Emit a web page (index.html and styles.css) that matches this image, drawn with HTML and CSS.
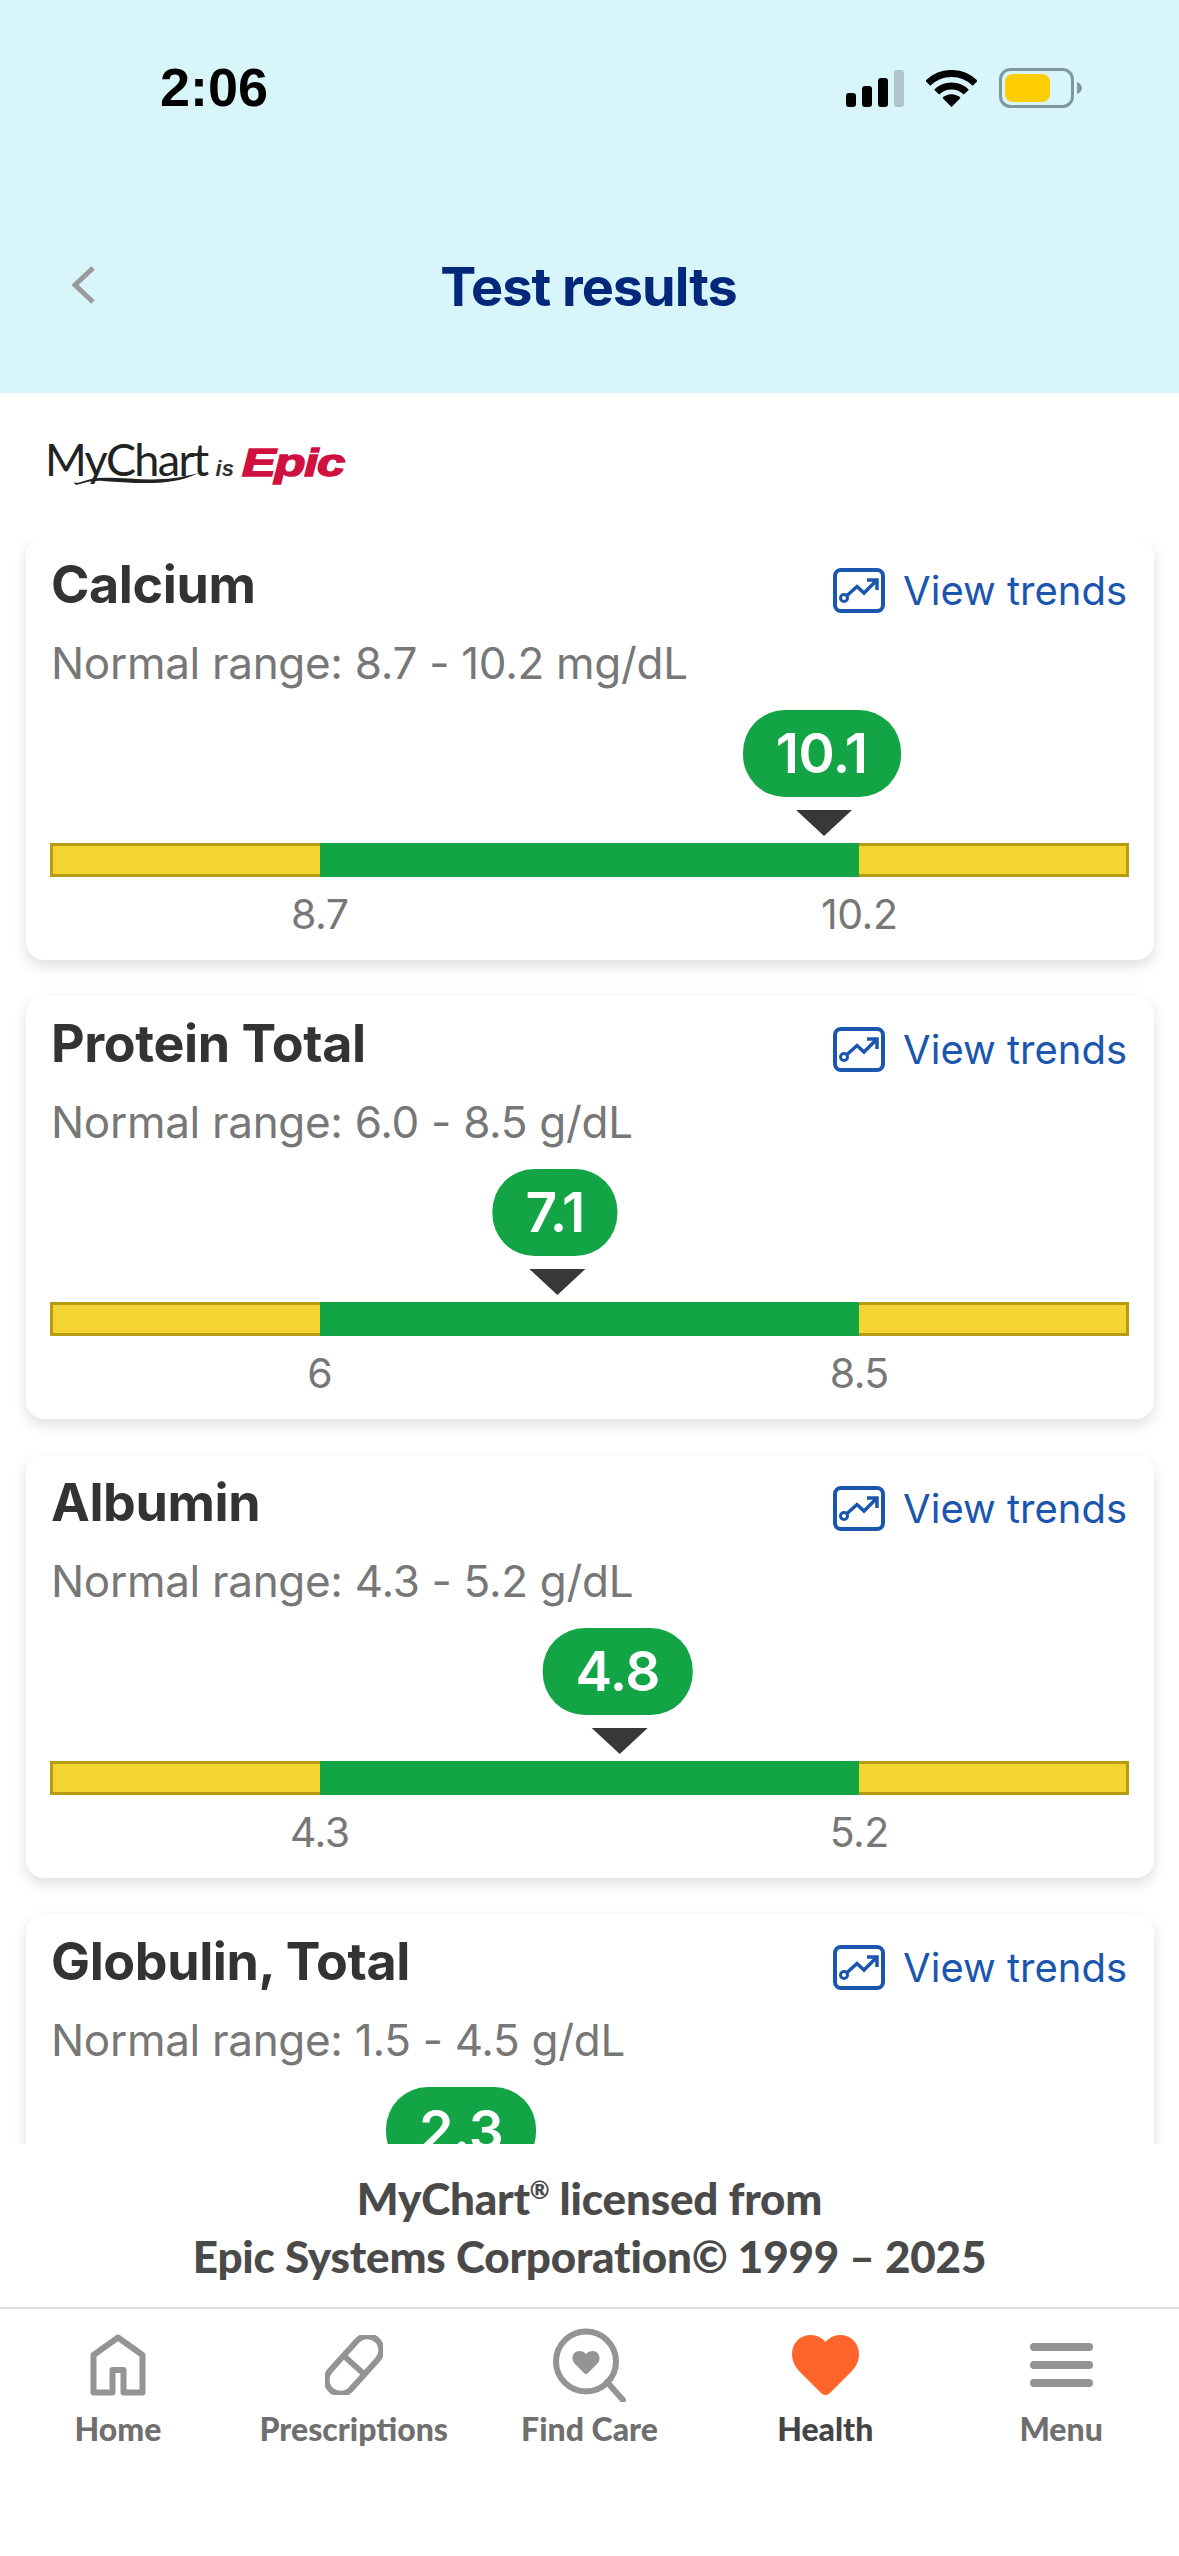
FILE: index.html
```html
<!DOCTYPE html>
<html lang="en">
<head>
    <meta charset="UTF-8">
    <meta name="viewport" content="width=device-width, initial-scale=1.0">
    <title>Test results</title>
    <link rel="stylesheet" href="styles.css">
</head>
<body>
    <svg class="sprite" aria-hidden="true">
        <symbol id="trend" viewBox="0 0 52 45">
            <rect x="2" y="2" width="48" height="41" rx="6" fill="none" stroke="currentColor" stroke-width="4"/>
            <circle cx="11" cy="30" r="3.5" fill="none" stroke="currentColor" stroke-width="3"/>
            <path d="M14 27.500L24 18.500L31 25L44 12M34 12H44V22" fill="none" stroke="currentColor" stroke-width="3.500"/>
        </symbol>
    </svg>

    <header class="header">
        <div class="status-bar">
            <span class="clock">2:06</span>
            <div class="status-icons">
                <svg class="signal" viewBox="0 0 58 37">
                    <rect x="0" y="23" width="10" height="14" rx="3"/>
                    <rect x="16" y="16" width="10" height="21" rx="3"/>
                    <rect x="32" y="8" width="10" height="29" rx="3"/>
                    <rect x="48" y="0" width="10" height="37" rx="3" fill="#aec5ca"/>
                </svg>
                <svg class="wifi" viewBox="0 0 51 37">
                    <path d="M1.800 13.300A33.500 33.500 0 0 1 49.200 13.300" fill="none" stroke="#000" stroke-width="7"/>
                    <path d="M10.650 22.150A21 21 0 0 1 40.350 22.150" fill="none" stroke="#000" stroke-width="7"/>
                    <path d="M25.500 37L16.500 28A12.700 12.700 0 0 1 34.500 28Z"/>
                </svg>
                <svg class="battery" viewBox="0 0 83 40">
                    <rect x="1.500" y="1.500" width="72" height="37" rx="10" fill="none" stroke="#7f979e" stroke-width="3"/>
                    <rect x="6" y="6" width="45" height="28" rx="8" fill="#ffcc00"/>
                    <path d="M78 14C81 15 83 18 83 20C83 22 81 25 78 26Z" fill="#7f979e"/>
                </svg>
            </div>
        </div>
        <div class="title-bar">
            <svg class="back" viewBox="0 0 24 38">
                <path d="M22 2L4 19L22 36" fill="none" stroke="#9b9b9b" stroke-width="5"/>
            </svg>
            <h1>Test results</h1>
        </div>
    </header>

    <div class="logo">
        <span class="logo-mychart">MyChart</span>
        <span class="logo-is">is</span>
        <span class="logo-epic">Epic</span>
        <svg class="logo-swoosh" viewBox="0 0 125 12">
            <path d="M0 9C5 12 12 6 25 5C55 3 85 12 125 0C100 14 60 10 30 8C18 7 8 11 3 12Z" fill="#222"/>
        </svg>
    </div>

    <main class="results">
        <section class="card">
            <div class="card-head">
                <h2>Calcium</h2>
                <a href="#" class="trends"><svg class="trend-icon"><use href="#trend"/></svg>View trends</a>
            </div>
            <p class="range">Normal range: 8.7 - 10.2 mg/dL</p>
            <div class="scale">
                <div class="marker" style="left: 71.7%">
                    <span class="value">10.1</span>
                    <span class="pointer"></span>
                </div>
                <div class="track"><span class="low"></span><span class="normal"></span><span class="high"></span></div>
                <div class="ticks"><span>8.7</span><span>10.2</span></div>
            </div>
        </section>

        <section class="card">
            <div class="card-head">
                <h2>Protein Total</h2>
                <a href="#" class="trends"><svg class="trend-icon"><use href="#trend"/></svg>View trends</a>
            </div>
            <p class="range">Normal range: 6.0 - 8.5 g/dL</p>
            <div class="scale">
                <div class="marker" style="left: 47%">
                    <span class="value">7.1</span>
                    <span class="pointer"></span>
                </div>
                <div class="track"><span class="low"></span><span class="normal"></span><span class="high"></span></div>
                <div class="ticks"><span>6</span><span>8.5</span></div>
            </div>
        </section>

        <section class="card">
            <div class="card-head">
                <h2>Albumin</h2>
                <a href="#" class="trends"><svg class="trend-icon"><use href="#trend"/></svg>View trends</a>
            </div>
            <p class="range">Normal range: 4.3 - 5.2 g/dL</p>
            <div class="scale">
                <div class="marker" style="left: 52.8%">
                    <span class="value">4.8</span>
                    <span class="pointer"></span>
                </div>
                <div class="track"><span class="low"></span><span class="normal"></span><span class="high"></span></div>
                <div class="ticks"><span>4.3</span><span>5.2</span></div>
            </div>
        </section>

        <section class="card">
            <div class="card-head">
                <h2>Globulin, Total</h2>
                <a href="#" class="trends"><svg class="trend-icon"><use href="#trend"/></svg>View trends</a>
            </div>
            <p class="range">Normal range: 1.5 - 4.5 g/dL</p>
            <div class="scale">
                <div class="marker" style="left: 38.3%">
                    <span class="value">2.3</span>
                    <span class="pointer"></span>
                </div>
                <div class="track"><span class="low"></span><span class="normal"></span><span class="high"></span></div>
            </div>
        </section>
    </main>

    <footer class="license">
        MyChart<sup>®</sup> licensed from<br>
        Epic Systems Corporation© 1999 – 2025
    </footer>

    <nav class="tabs">
        <a href="#" class="tab">
            <span class="tab-icon">
                <svg width="56" height="62" viewBox="0 0 56 62">
                    <path d="M3.500 58.500V21L28 3.500L52.500 21V58.500H33.500V36H22.500V58.500Z" fill="none" stroke="#949494" stroke-width="6" stroke-linejoin="round"/>
                </svg>
            </span>
            Home
        </a>
        <a href="#" class="tab">
            <span class="tab-icon">
                <svg width="58" height="60" viewBox="0 0 58 60">
                    <g transform="rotate(42 29 30)" fill="none" stroke="#949494" stroke-width="6">
                        <rect x="15" y="-4" width="28" height="68" rx="14"/>
                        <path d="M15 30H43"/>
                    </g>
                </svg>
            </span>
            Prescriptions
        </a>
        <a href="#" class="tab">
            <span class="tab-icon">
                <svg width="73" height="74" viewBox="0 0 73 74">
                    <circle cx="33" cy="33.500" r="30" fill="none" stroke="#949494" stroke-width="6"/>
                    <path d="M54 54L70 72" fill="none" stroke="#949494" stroke-width="6" stroke-linecap="round"/>
                    <path d="M33 46C32 46 31 45 30 44L22 36C20 34 19.500 32 19.500 30C19.500 26 22.500 23 26 23C29 23 31.500 24 33 26C34.500 24 37 23 40 23C43.500 23 46.500 26 46.500 30C46.500 32 46 34 44 36L36 44C35 45 34 46 33 46Z" fill="#949494"/>
                </svg>
            </span>
            Find Care
        </a>
        <a href="#" class="tab tab-active">
            <span class="tab-icon">
                <svg width="67" height="60" viewBox="0 0 67 60">
                    <path d="M33.500 60C31 60 30 59 28 57L9 38C3 32 0 26 0 19C0 8 8 0 19 0C25 0 30 3 33.500 7C37 3 42 0 48 0C59 0 67 8 67 19C67 26 64 32 58 38L39 57C37 59 36 60 33.500 60Z" fill="#ff642b"/>
                </svg>
            </span>
            Health
        </a>
        <a href="#" class="tab">
            <span class="tab-icon">
                <span class="burger"><i></i><i></i><i></i></span>
            </span>
            Menu
        </a>
    </nav>
</body>
</html>
```

FILE: styles.css
```css
:root {
    --sky: #d8f5fa;
    --navy: #03277a;
    --link-blue: #1a56ad;
    --green: #12a445;
    --yellow: #f4d433;
    --yellow-edge: #b79b10;
    --text-dark: #333333;
    --text-grey: #777777;
}

* {
    margin: 0;
    padding: 0;
    box-sizing: border-box;
}

body {
    width: 1179px;
    height: 2556px;
    display: flex;
    flex-direction: column;
    overflow: hidden;
    background: white;
    font-family: 'Inter', 'Liberation Sans', sans-serif;
}

.sprite {
    display: none;
}

/* Header */
.header {
    height: 393px;
    flex: none;
    background: var(--sky);
}

.status-bar {
    height: 175px;
    padding: 62px 97px 0 160px;
    display: flex;
    justify-content: space-between;
    align-items: flex-start;
}

.clock {
    font-family: 'Liberation Sans', sans-serif;
    font-size: 54px;
    font-weight: bold;
    line-height: 50px;
    color: #000;
}

.status-icons {
    display: flex;
    align-items: center;
    gap: 22px;
    padding-top: 6px;
}

.signal {
    width: 58px;
    height: 37px;
}

.wifi {
    width: 51px;
    height: 37px;
}

.battery {
    width: 83px;
    height: 40px;
}

.title-bar {
    position: relative;
    text-align: center;
    padding: 77px 2px 0 0;
}

.title-bar h1 {
    font-size: 54px;
    font-weight: 700;
    line-height: 70px;
    letter-spacing: -1px;
    color: var(--navy);
}

.back {
    position: absolute;
    left: 71px;
    top: 91px;
    width: 24px;
    height: 38px;
}

/* Logo */
.logo {
    position: relative;
    height: 144px;
    flex: none;
    padding: 41px 0 0 45px;
    display: flex;
    align-items: baseline;
    white-space: nowrap;
}

.logo-mychart {
    font-family: 'Lato', sans-serif;
    font-size: 45px;
    font-weight: 400;
    line-height: 50px;
    letter-spacing: -1.700px;
    color: #222;
}

.logo-is {
    margin-left: 8px;
    font-family: 'Liberation Sans', sans-serif;
    font-size: 22px;
    font-weight: bold;
    font-style: italic;
    color: #333;
}

.logo-epic {
    margin-left: 8px;
    font-family: 'Liberation Sans', sans-serif;
    font-size: 39px;
    font-weight: bold;
    font-style: italic;
    letter-spacing: -1px;
    color: #d0103f;
    -webkit-text-stroke: 1.500px #d0103f;
    transform: scaleX(1.3);
    transform-origin: left;
}

.logo-swoosh {
    position: absolute;
    left: 73px;
    top: 80px;
    width: 125px;
    height: 12px;
}

/* Result cards */
.results {
    flex: 1;
    min-height: 0;
    overflow: hidden;
    display: flex;
    flex-direction: column;
    gap: 36px;
    padding: 0 25px 0 26px;
}

.card {
    flex: none;
    height: 423px;
    padding: 18px 25px 0 24px;
    background: white;
    border-radius: 18px;
    box-shadow: 0 6px 14px rgba(0, 0, 0, 0.13);
}

.card-head {
    display: flex;
    justify-content: space-between;
    align-items: flex-start;
    height: 83px;
    padding-left: 1px;
}

.card-head h2 {
    font-size: 52px;
    font-weight: 700;
    line-height: 60px;
    letter-spacing: -0.4px;
    color: var(--text-dark);
}

.trends {
    display: flex;
    align-items: center;
    gap: 18px;
    padding-top: 13px;
    margin-right: 2px;
    font-size: 40px;
    line-height: 45px;
    color: var(--link-blue);
    text-decoration: none;
}

.trend-icon {
    width: 52px;
    height: 45px;
}

.range {
    padding-left: 1px;
    font-size: 44px;
    line-height: 50px;
    letter-spacing: -0.3px;
    color: var(--text-grey);
}

.scale {
    position: relative;
    padding-top: 155px;
}

.marker {
    position: absolute;
    top: 22px;
    display: flex;
    flex-direction: column;
    align-items: center;
    transform: translateX(-50%);
}

.value {
    height: 87px;
    padding: 0 33px;
    margin-right: 4px;
    border-radius: 42px;
    background: var(--green);
    font-size: 55px;
    font-weight: 600;
    line-height: 87px;
    letter-spacing: -0.5px;
    color: white;
}

.pointer {
    width: 0;
    height: 0;
    margin-top: 13px;
    border-left: 28px solid transparent;
    border-right: 28px solid transparent;
    border-top: 26px solid #383838;
}

.track {
    display: grid;
    grid-template-columns: 1fr 2fr 1fr;
    height: 34px;
}

.low,
.high {
    background: var(--yellow);
    border: 3px solid var(--yellow-edge);
}

.low {
    border-right: none;
}

.high {
    border-left: none;
}

.normal {
    background: var(--green);
}

.ticks {
    display: grid;
    grid-template-columns: 1fr 1fr;
    padding-top: 12px;
    text-align: center;
    font-size: 41px;
    line-height: 50px;
    letter-spacing: -0.5px;
    color: var(--text-grey);
}

/* License note */
.license {
    height: 163px;
    flex: none;
    padding-top: 25px;
    text-align: center;
    font-family: 'Lato', sans-serif;
    font-size: 44px;
    font-weight: 900;
    line-height: 58px;
    letter-spacing: -0.2px;
    color: #4a4a4a;
    background: white;
}

.license sup {
    font-size: 24px;
    line-height: 0;
}

/* Bottom tabs */
.tabs {
    height: 249px;
    flex: none;
    padding-top: 18px;
    display: grid;
    grid-template-columns: repeat(5, 1fr);
    align-items: start;
    border-top: 2px solid #dddddd;
}

.tab {
    display: flex;
    flex-direction: column;
    align-items: center;
    gap: 8px;
    font-family: 'Lato', sans-serif;
    font-size: 32px;
    font-weight: 900;
    line-height: 36px;
    color: #6f6f6f;
    text-decoration: none;
}

.tab-active {
    color: #444444;
}

.tab-icon {
    height: 76px;
    display: flex;
    align-items: center;
}

.burger {
    width: 63px;
    display: flex;
    flex-direction: column;
    gap: 10px;
}

.burger i {
    height: 8px;
    border-radius: 4px;
    background: #949494;
}
```
